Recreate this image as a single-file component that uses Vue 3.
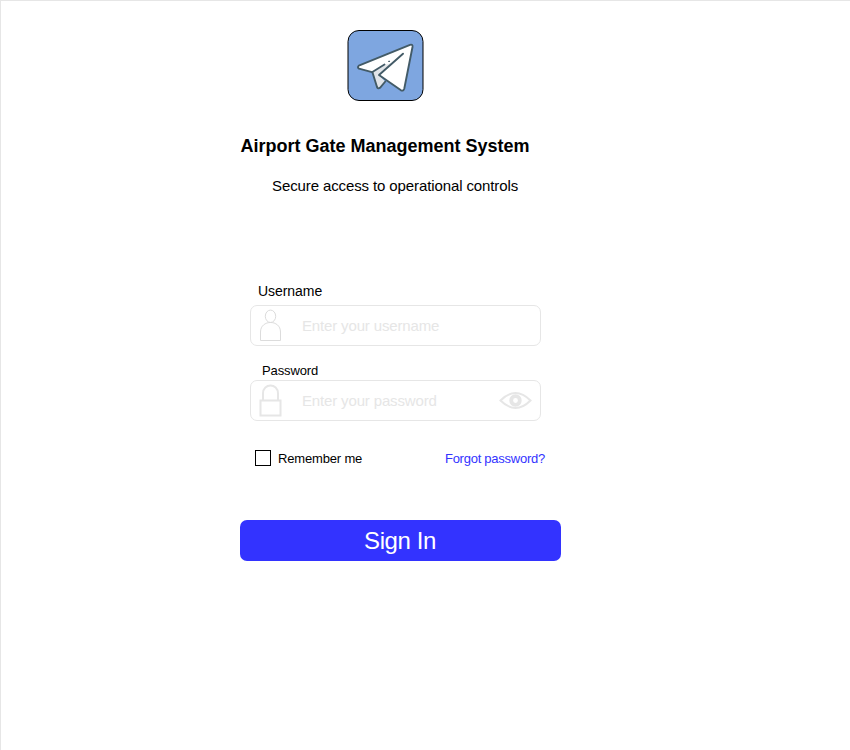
<script setup>
import { ref } from 'vue'

const username = ref('')
const password = ref('')
const remember = ref(false)
</script>

<template>
  <main class="page">
    <svg class="logo" viewBox="0 0 77 71" width="77" height="71">
      <rect x="1" y=".5" width="75" height="70" rx="11" fill="#7ea6e0" stroke="#000" />
      <g stroke="#435b67" stroke-width="1.9" stroke-linejoin="round" stroke-linecap="round">
        <path d="M63 14.800L11.800 35.200Q10 37.200 12 38.200L25 42.200L32 45L54 60Q56.500 61 57.300 58.500L65.500 17Q66 14 63 14.800Z" fill="#fff" stroke="none" />
        <path d="M25.500 42.500L30 57Q31 59.300 33 57.800L38.500 52L32 45L46 32.500L38 35Z" fill="#e2e5e9" stroke="none" />
        <path d="M25.500 42.500L30 57Q31 59.300 33 57.800L38.300 51.500" fill="none" />
        <path d="M37.500 34.500L25 42.200L12 38.600Q10 37.200 11.800 35.600L63 14.800Q66 14 65.500 17L57.300 58.500Q56.500 61.500 54 60.300L32 45L56 23.700" fill="none" />
        <circle cx="42" cy="31.300" r=".35" fill="#435b67" stroke-width="1" />
      </g>
    </svg>
    <h1 class="title">Airport Gate Management System</h1>
    <p class="subtitle">Secure access to operational controls</p>

    <form class="form" @submit.prevent>
      <label class="label user-label" for="username">Username</label>
      <div class="field">
        <svg class="icon" viewBox="0 0 23 33" width="23" height="33" fill="none" stroke="#dcdcdc">
          <ellipse cx="11.500" cy="7.300" rx="5.200" ry="6.200" />
          <path d="M1.500 31.500V23C1.500 10.300 21.500 10.300 21.500 23V31.500Z" />
        </svg>
        <input id="username" v-model="username" type="text" placeholder="Enter your username" />
      </div>

      <label class="label pass-label" for="password">Password</label>
      <div class="field">
        <svg class="icon" viewBox="0 0 23 33" width="23" height="33" fill="none" stroke="#e6e6e6" stroke-width="2">
          <path d="M4 16V9.500C4 -1.200 19 -1.200 19 9.500V16" />
          <rect x="1.500" y="16.500" width="20" height="15" />
        </svg>
        <input id="password" v-model="password" type="password" placeholder="Enter your password" />
        <svg class="eye" viewBox="0 0 33 18" width="33" height="18" fill="none" stroke="#e6e6e6">
          <path d="M1.500 8.500Q16.500 -6.500 31.500 8.500Q16.500 23.500 1.500 8.500Z" stroke-width="2" />
          <circle cx="16.500" cy="8.500" r="4.300" stroke-width="3.800" />
        </svg>
      </div>

      <div class="options">
        <label class="remember">
          <input v-model="remember" class="check" type="checkbox" />
          <span class="remember-text">Remember me</span>
        </label>
        <a class="forgot">Forgot password?</a>
      </div>
      <button class="submit" type="submit">Sign In</button>
    </form>
  </main>
</template>

<style>
body {
  margin: 0;
  background: #fff;
}
</style>

<style scoped>
.page {
  box-sizing: border-box;
  width: 850px;
  height: 750px;
  padding: 29px 0 0 239px;
  border-top: 1px solid #e6e6e6;
  border-left: 1px solid #e6e6e6;
  font-family: "Liberation Sans", Arial, sans-serif;
  color: #000;
  overflow: hidden;
}
.logo {
  display: block;
  margin-left: 107px;
}
.title {
  margin: 34px 0 0 .5px;
  font-size: 18px;
  line-height: 22px;
  white-space: nowrap;
}
.subtitle {
  margin: 19px 0 0 32px;
  font-size: 15px;
  letter-spacing: -.11px;
  line-height: 20px;
}
.form {
  display: flex;
  flex-direction: column;
  width: 321px;
  margin-top: 86px;
}
.label {
  display: block;
}
.user-label {
  height: 23px;
  margin-left: 18px;
  font-size: 14px;
  letter-spacing: -.05px;
  line-height: 18px;
}
.pass-label {
  height: 17px;
  margin: 17px 0 0 22px;
  font-size: 13px;
  letter-spacing: -.12px;
  line-height: 16px;
}
.field {
  box-sizing: border-box;
  display: flex;
  align-items: center;
  width: 291px;
  height: 41px;
  margin-left: 10px;
  padding: 0 8px;
  border: 1px solid #e6e6e6;
  border-radius: 7px;
}
.icon {
  flex: none;
}
.field input {
  flex: 1;
  min-width: 0;
  margin: 0 0 0 20px;
  padding: 0;
  border: 0;
  outline: 0;
  background: none;
  font: 15px "Liberation Sans", Arial, sans-serif;
  letter-spacing: -.15px;
}
.field input::placeholder {
  color: #e6e6e6;
  opacity: 1;
}
.eye {
  flex: none;
}
.options {
  display: flex;
  align-items: flex-start;
  justify-content: space-between;
  height: 17px;
  margin: 29px 16px 0 15px;
  font-size: 13px;
  letter-spacing: -.17px;
  line-height: 18px;
}
.remember {
  display: flex;
  align-items: flex-start;
  gap: 7px;
}
.check {
  appearance: none;
  box-sizing: border-box;
  width: 16px;
  height: 16px;
  margin: 0;
  border: 1px solid #000;
}
.forgot {
  color: #3333ff;
  letter-spacing: -.25px;
}
.submit {
  height: 41px;
  margin-top: 53px;
  padding: 0 1px 0 0;
  border: 0;
  border-radius: 7px;
  background: #3333ff;
  color: #fff;
  font: 24px/41px "Liberation Sans", Arial, sans-serif;
  letter-spacing: -.4px;
}
</style>
